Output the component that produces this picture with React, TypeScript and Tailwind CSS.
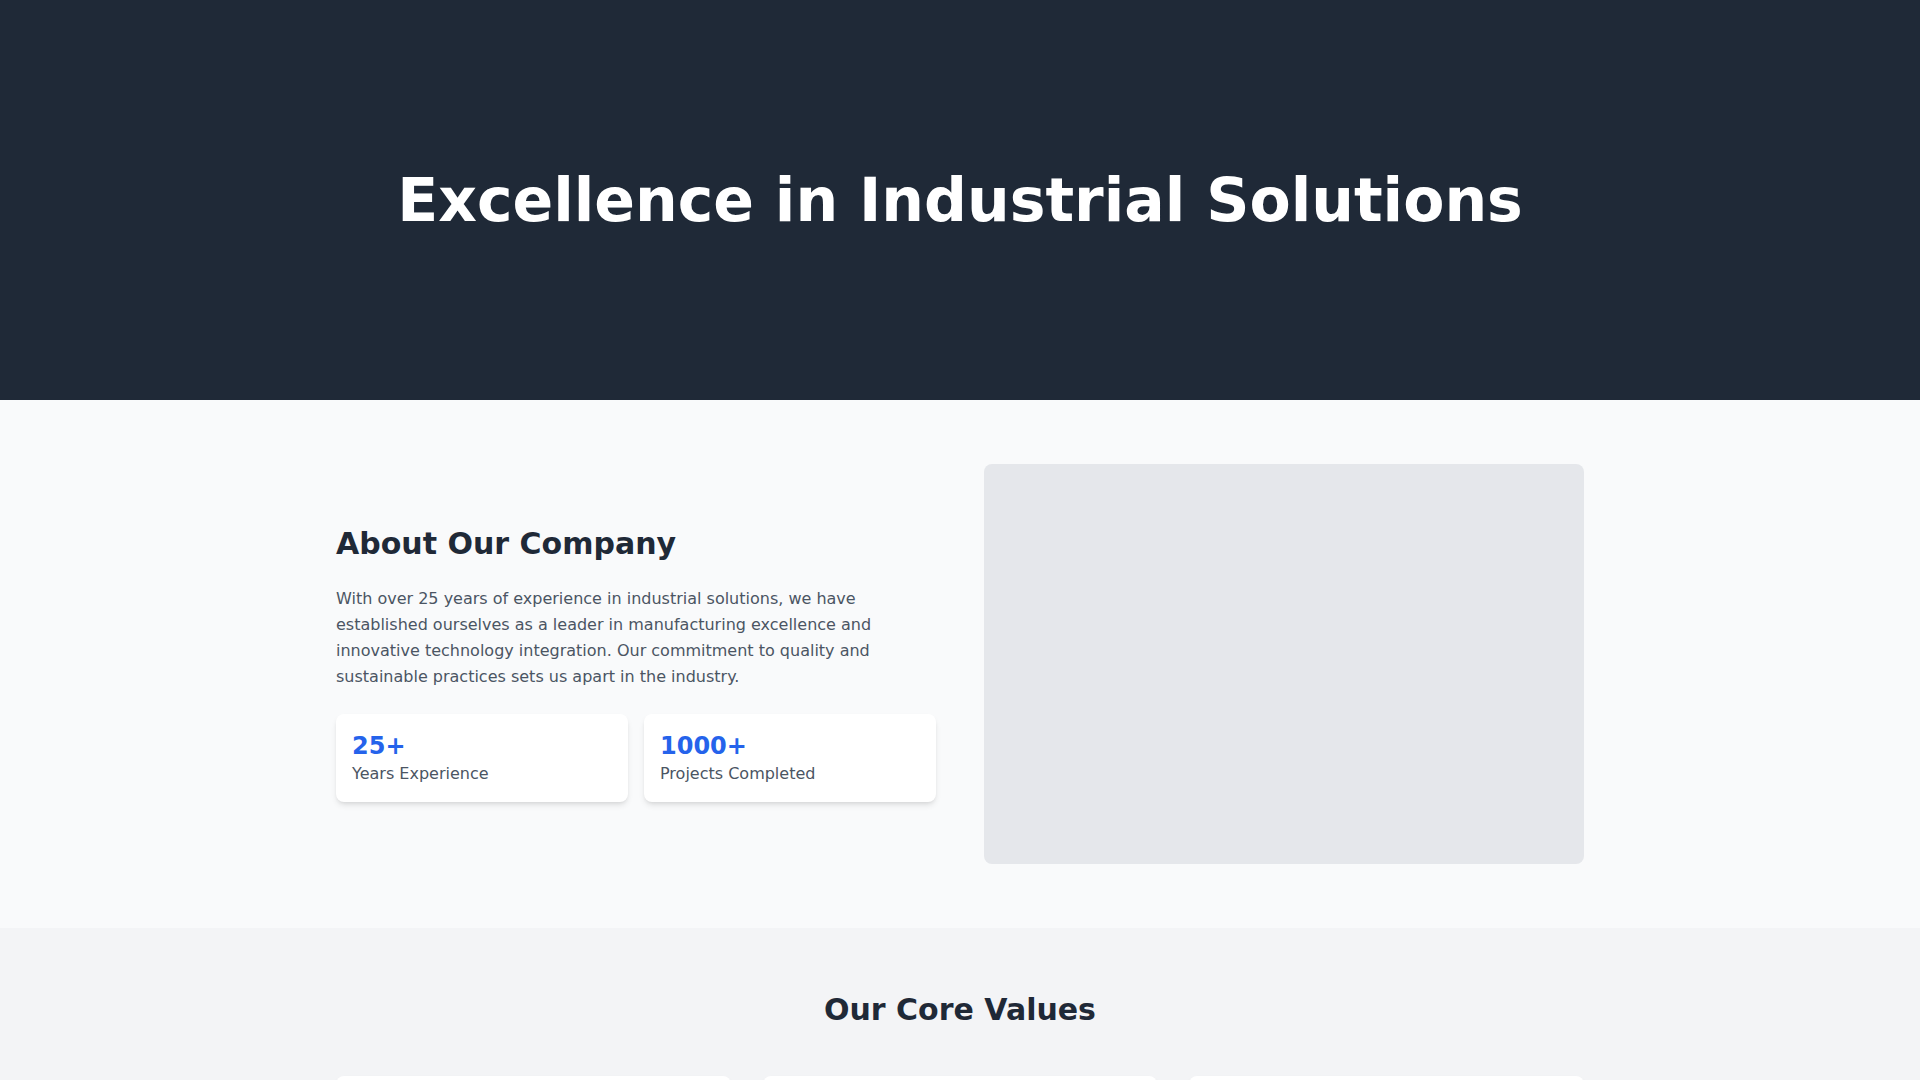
import React from "react";

const values = [
  { title: "Quality", text: "We maintain the highest standards in every product and service we deliver to our clients." },
  { title: "Innovation", text: "Continuously pushing boundaries with cutting-edge technology and creative solutions." },
  { title: "Sustainability", text: "Committed to environmentally responsible practices for a better tomorrow." },
];

export default function App() {
  return (
    <div className="min-h-screen font-['DejaVu_Sans',sans-serif]">
      <section className="h-[400px] bg-[#1f2937] flex items-center justify-center">
        <h1 className="text-6xl font-bold text-white text-center">Excellence in Industrial Solutions</h1>
      </section>

      <section className="bg-[#f9fafb] py-16">
        <div className="max-w-7xl mx-auto px-4 grid grid-cols-2 gap-12 items-center">
          <div>
            <h2 className="text-3xl font-bold text-[#1f2937] mb-6">About Our Company</h2>
            <p className="text-[#4b5563] leading-relaxed mb-6">
              With over 25 years of experience in industrial solutions, we have established ourselves as a leader in
              manufacturing excellence and innovative technology integration. Our commitment to quality and
              sustainable practices sets us apart in the industry.
            </p>
            <div className="grid grid-cols-2 gap-4">
              <div className="bg-white p-4 rounded-lg shadow-md">
                <div className="text-2xl font-bold text-[#2563eb]">25+</div>
                <div className="text-[#4b5563]">Years Experience</div>
              </div>
              <div className="bg-white p-4 rounded-lg shadow-md">
                <div className="text-2xl font-bold text-[#2563eb]">1000+</div>
                <div className="text-[#4b5563]">Projects Completed</div>
              </div>
            </div>
          </div>
          <div className="h-[400px] bg-[#e5e7eb] rounded-lg"></div>
        </div>
      </section>

      <section className="bg-[#f3f4f6] py-16">
        <div className="max-w-7xl mx-auto px-4">
          <h2 className="text-3xl font-bold text-[#1f2937] text-center mb-12">Our Core Values</h2>
          <div className="grid grid-cols-3 gap-8">
            {values.map((v) => (
              <div key={v.title} className="bg-white p-6 rounded-lg shadow-md">
                <div className="w-12 h-12 bg-[#dbeafe] rounded-full flex items-center justify-center mb-4">
                  <div className="w-6 h-6 rounded-full bg-[#2563eb]"></div>
                </div>
                <h3 className="text-xl font-bold text-[#1f2937] mb-2">{v.title}</h3>
                <p className="text-[#4b5563]">{v.text}</p>
              </div>
            ))}
          </div>
        </div>
      </section>
    </div>
  );
}
